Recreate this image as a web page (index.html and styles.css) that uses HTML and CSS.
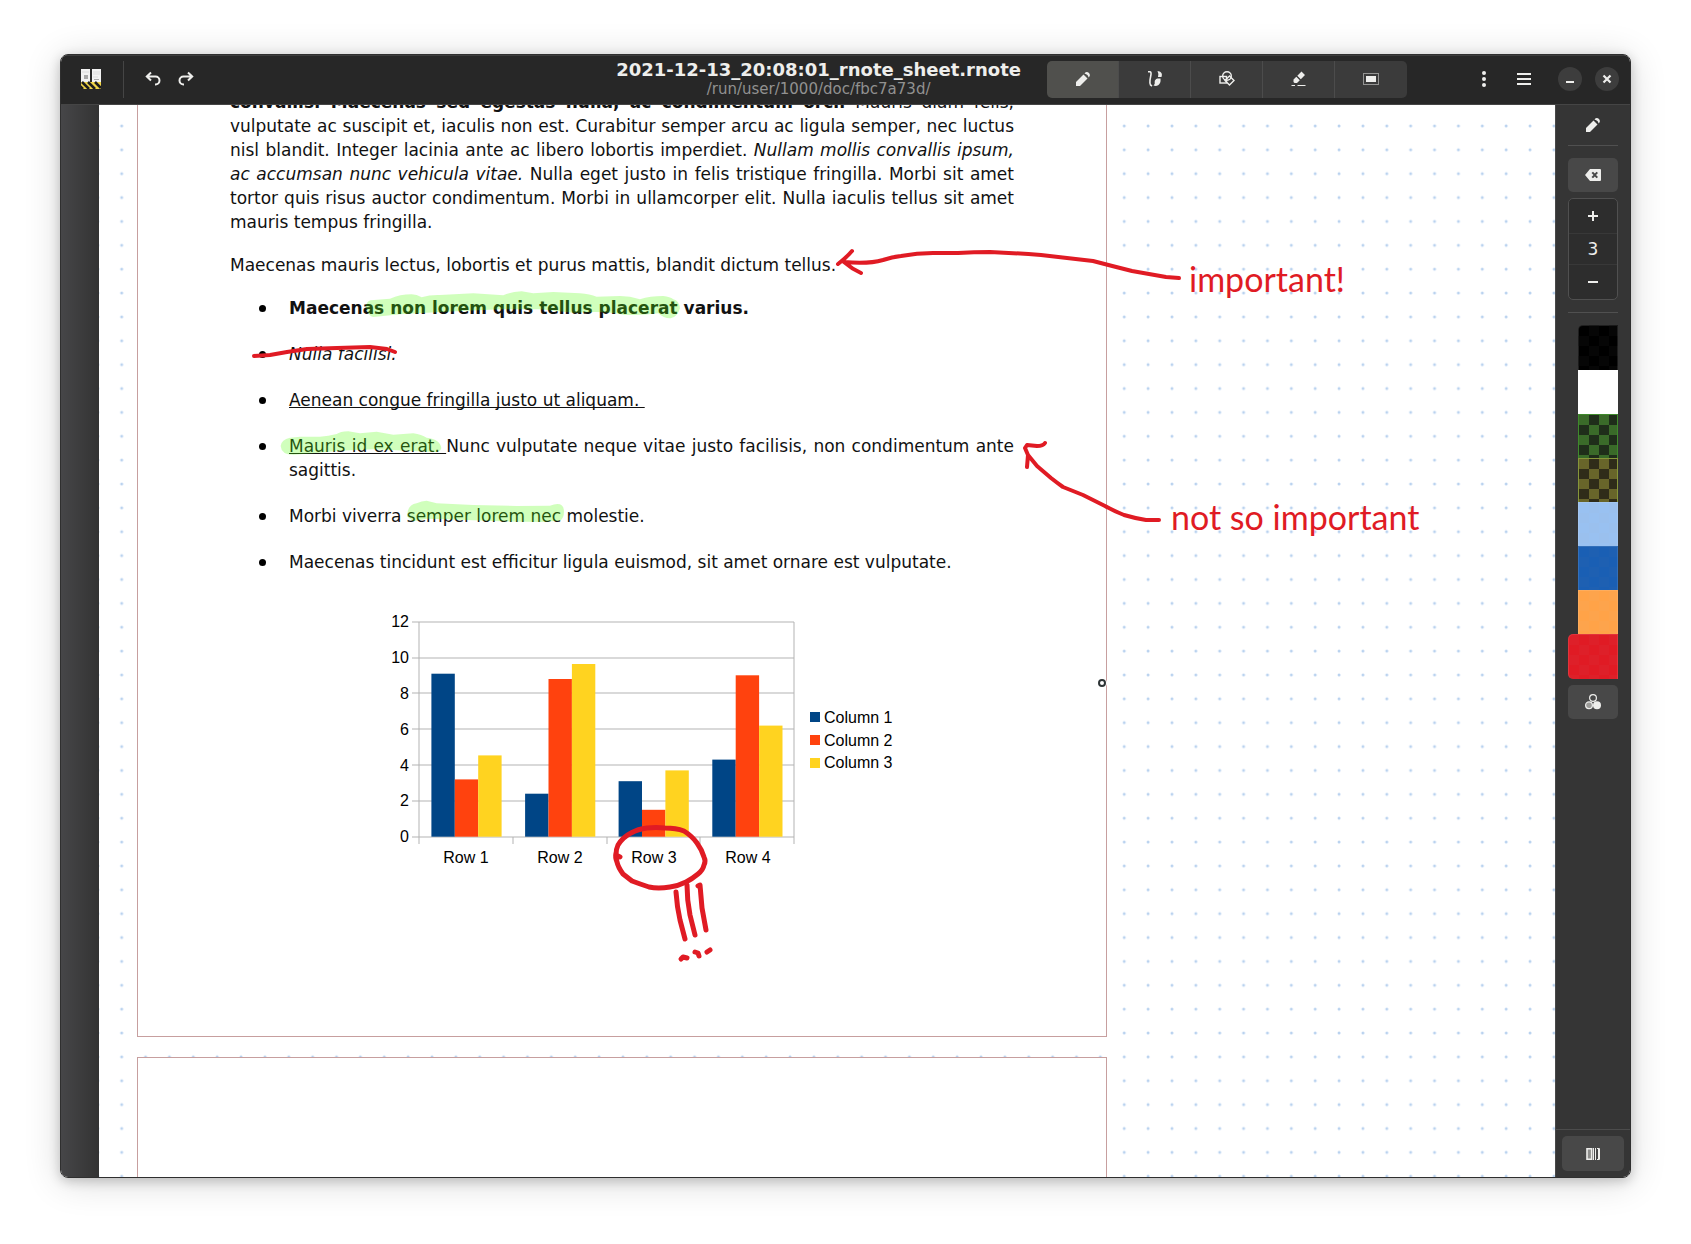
FILE: index.html
```html
<!DOCTYPE html>
<html lang="en">
<head>
	<meta charset="UTF-8">
	<meta name="viewport" content="width=device-width, initial-scale=1.0">
	<title>Rnote</title>
	<link rel="stylesheet" href="styles.css">
</head>
<body>
	<div class="window">
		<header class="headerbar">
			<svg class="app_icon" viewBox="0 0 20 20">
				<rect x="0" y="0" width="9" height="13" fill="#f2f2f2"/>
				<rect x="11" y="0" width="9" height="13" fill="#f2f2f2"/>
				<rect x="3" y="6" width="4" height="4" fill="#a8a8a8"/>
				<path d="M1 3h7M12 3h7M12 5h7M12 8h5" stroke="#dcdcdc"/>
				<path d="M13 10.5h5" stroke="#aaa"/>
				<rect x="0" y="13" width="20" height="7" fill="#f0d54a"/>
				<path d="M1 13l7 7M7 13l7 7M14 13l6 6M-3 15l5 5" stroke="#1e1e1e" stroke-width="2.6"/>
			</svg>
			<div class="history">
				<button class="flat" aria-label="Undo"><svg class="icon" viewBox="0 0 16 16"><path d="M6 1.500L1.800 5.500L6 9.500M2 5.500H10.500a4 4 0 0 1 0 8H10" fill="none" stroke="#eeeeec" stroke-width="2"/></svg></button>
				<button class="flat" aria-label="Redo"><svg class="icon" viewBox="0 0 16 16"><path d="M10 1.500L14.200 5.500L10 9.500M14 5.500H5.500a4 4 0 0 0 0 8H6" fill="none" stroke="#eeeeec" stroke-width="2"/></svg></button>
			</div>
			<div class="title_box">
				<h1 class="title">2021-12-13_20:08:01_rnote_sheet.rnote</h1>
				<div class="subtitle">/run/user/1000/doc/fbc7a73d/</div>
			</div>
			<div class="tools">
				<button class="tool active" aria-label="Pencil"><svg class="icon" viewBox="0 0 16 16"><path d="M1 15V11L8.500 3.500L12.500 7.500L5 15Z"/><path d="M9.500 2.500Q11.500 0 14 2Q16 4.500 13.500 6.500Q13.400 3.500 9.500 2.500Z"/></svg></button>
				<button class="tool" aria-label="Brush"><svg class="icon" viewBox="0 0 16 16"><path d="M1 .8H3Q4.300 1 4 3.500L3 9Q2.600 12 3.500 14L5 15" fill="none" stroke="#eeeeec" stroke-width="1.600"/><path d="M10.500 0C13.500 .500 16 2 14.500 6H11Q12 3 10.500 0ZM10.500 7.500L13.500 7.500Q14 12 11.500 14Q9 15.500 6.500 14.500Q8.300 13 7.700 11Q7.500 8.500 10.500 7.500Z"/></svg></button>
				<button class="tool" aria-label="Shapes"><svg class="icon" viewBox="0 0 16 16"><g fill="none" stroke="#eeeeec" stroke-width="1.400"><circle cx="8" cy="5" r="4.300"/><rect x="1" y="5.500" width="6.500" height="6.500"/><path d="M10.500 5L15 9.500L10.500 14L6 9.500Z"/></g></svg></button>
				<button class="tool" aria-label="Eraser"><svg class="icon" viewBox="0 0 16 16"><path d="M10.500 0.500L14 4L9.800 8.200L6.300 4.700ZM5.300 5.700L8.800 9.200L6 12H3.500L2.500 11V8.500ZM0.500 14H4V15H0.500ZM6.500 14H14.500V15H6.500Z"/></svg></button>
				<button class="tool" aria-label="Selector"><svg class="icon" viewBox="0 0 16 16"><rect x="0.500" y="2.500" width="15" height="11" fill="none" stroke="#eeeeec" stroke-dasharray="1 1"/><rect x="3" y="5" width="10" height="6"/></svg></button>
			</div>
			<div class="menus">
				<button class="flat" aria-label="Canvas menu"><svg class="icon" viewBox="0 0 16 16"><circle cx="8" cy="2" r="2"/><circle cx="8" cy="8" r="2"/><circle cx="8" cy="14" r="2"/></svg></button>
				<button class="flat" aria-label="Main menu"><svg class="icon" viewBox="0 0 16 16"><path d="M1 2h14v2H1zM1 7h14v2H1zM1 12h14v2H1z"/></svg></button>
			</div>
			<div class="window_controls">
				<button class="circle" aria-label="Minimize"><svg class="icon" viewBox="0 0 16 16"><path d="M4 10h8v2H4z"/></svg></button>
				<button class="circle" aria-label="Close"><svg class="icon" viewBox="0 0 16 16"><path d="M4.500 4.500L11.500 11.500M11.500 4.500L4.500 11.500" stroke="#eeeeec" stroke-width="2.200"/></svg></button>
			</div>
		</header>

		<div class="content">
			<div class="gutter"></div>
			<main class="sheet">
				<svg class="dots" width="100%" height="100%">
					<defs>
						<pattern id="dotGrid" x="10.700" y="9" width="23.870" height="23.870" patternUnits="userSpaceOnUse">
							<circle cx="12" cy="12" r="1.500" fill="#b9d2ef"/>
						</pattern>
					</defs>
					<rect width="100%" height="100%" fill="url(#dotGrid)"/>
				</svg>

				<article class="page first">
					<p><b>convallis. Maecenas sed egestas nulla, ac condimentum orci.</b> Mauris diam felis, vulputate ac suscipit et, iaculis non est. Curabitur semper arcu ac ligula semper, nec luctus nisl blandit. Integer lacinia ante ac libero lobortis imperdiet. <i>Nullam mollis convallis ipsum, ac accumsan nunc vehicula vitae.</i> Nulla eget justo in felis tristique fringilla. Morbi sit amet tortor quis risus auctor condimentum. Morbi in ullamcorper elit. Nulla iaculis tellus sit amet mauris tempus fringilla.</p>
					<p>Maecenas mauris lectus, lobortis et purus mattis, blandit dictum tellus.</p>
					<ul>
						<li><b>Maecenas non lorem quis tellus placerat varius.</b></li>
						<li><i>Nulla facilisi.</i></li>
						<li><u>Aenean congue fringilla justo ut aliquam.&nbsp;</u></li>
						<li><u>Mauris id ex erat. </u>Nunc vulputate neque vitae justo facilisis, non condimentum ante sagittis.</li>
						<li>Morbi viverra semper lorem nec molestie.</li>
						<li>Maecenas tincidunt est efficitur ligula euismod, sit amet ornare est vulputate.</li>
					</ul>
					<svg class="chart" viewBox="380 610 530 260" width="530" height="260">
						<g class="grid">
							<path d="M412 622H794M412 658H794M412 693H794M412 729H794M412 765H794M412 801H794M412 837H794"/>
							<path d="M419 622V844M794 622V844M513 837V844M607 837V844M700 837V844"/>
						</g>
						<g fill="#004586">
							<rect x="431.400" y="673.700" width="23.400" height="163"/>
							<rect x="525.100" y="793.700" width="23.400" height="43"/>
							<rect x="618.600" y="781.200" width="23.400" height="55.500"/>
							<rect x="712.300" y="759.600" width="23.400" height="77.100"/>
						</g>
						<g fill="#ff420e">
							<rect x="454.800" y="779.400" width="23.400" height="57.300"/>
							<rect x="548.500" y="679" width="23.400" height="157.700"/>
							<rect x="642" y="809.800" width="23.400" height="26.900"/>
							<rect x="735.700" y="675.300" width="23.400" height="161.400"/>
						</g>
						<g fill="#ffd320">
							<rect x="478.200" y="755.400" width="23.400" height="81.300"/>
							<rect x="571.900" y="664" width="23.400" height="172.700"/>
							<rect x="665.400" y="770.400" width="23.400" height="66.300"/>
							<rect x="759.100" y="725.600" width="23.400" height="111.100"/>
						</g>
						<g text-anchor="end">
							<text x="409" y="627">12</text>
							<text x="409" y="663">10</text>
							<text x="409" y="699">8</text>
							<text x="409" y="735">6</text>
							<text x="409" y="771">4</text>
							<text x="409" y="806">2</text>
							<text x="409" y="842">0</text>
						</g>
						<g text-anchor="middle">
							<text x="466" y="863">Row 1</text>
							<text x="560" y="863">Row 2</text>
							<text x="654" y="863">Row 3</text>
							<text x="748" y="863">Row 4</text>
						</g>
						<rect x="810" y="712" width="10" height="10" fill="#004586"/>
						<rect x="810" y="735" width="10" height="10" fill="#ff420e"/>
						<rect x="810" y="758" width="10" height="10" fill="#ffd320"/>
						<text x="824" y="723">Column 1</text>
						<text x="824" y="746">Column 2</text>
						<text x="824" y="768">Column 3</text>
					</svg>
				</article>
				<article class="page"></article>

				<!-- pen strokes and notes on top of the document -->
				<svg class="ink" viewBox="99 105 1456 1072" width="1456" height="1072">
					<g class="marker" transform="translate(240 280) scale(.3333)">
						<path d="M378 80Q380 64 392 61L450 56Q480 43 515 43Q530 43 545 52Q570 44 600 45L700 40L790 46Q810 36 845 34L880 40L940 36L1020 40Q1050 42 1070 50L1140 48Q1170 48 1200 58Q1230 48 1270 48Q1290 50 1300 58Q1318 62 1320 85Q1312 112 1292 115Q1272 116 1255 100Q1200 108 1150 104Q1110 95 1060 96L1000 98L900 88L780 88L650 94L560 98L480 103L400 111Q385 110 378 80Z"/>
						<path d="M122 498Q124 478 150 473L180 470L240 470Q265 468 290 462Q300 455 325 454L360 460L410 455L460 464L520 460Q545 464 560 473Q602 478 604 505Q600 518 580 516L500 512L400 508L300 512L220 520L160 524Q124 524 122 498Z"/>
						<path d="M502 710Q500 675 530 670Q545 662 560 662L590 670L700 675L830 678L930 677Q972 662 972 695Q972 715 960 722L900 726L780 724L620 718L560 716L520 724Z"/>
					</g>
					<g class="pen">
						<path d="M254 356L270 355L287 352L307 349L337 348L370 347L387 349L395 352"/>
						<path d="M838 264Q846 258 852 251M861 273Q852 269 844 262C866 264 876 262 883 260Q892 257 901 256Q917 253 933 253L958 253Q974 252 990 252Q1015 253 1041 255Q1068 258 1093 261Q1112 266 1132 271L1166 277L1179 278"/>
						<path d="M1159 520L1146 520Q1134 518 1124 515Q1114 511 1105 506L1083 495L1063 487Q1056 482 1051 478L1037 466L1028 455M1027 467L1028 455L1025 448L1027 445L1037 446Q1043 446 1045 443"/>
						<g stroke-width="5">
							<path d="M620 857L616 855Q616 849 618 845Q623 837 631 833Q638 829 647 828Q656 827 665 828Q676 828 684 831Q692 836 697 843Q702 850 704 857Q706 861 704 865Q703 870 698 874Q692 879 686 882Q678 886 670 887Q658 889 649 887Q640 884 632 881L623 874Q618 867 617 862Q615 857 616 853"/>
							<path d="M676 892Q677 907 680 920L685 939M687 885Q687 900 690 915L695 935M698 886L700 885L702 908L706 930"/>
							<path d="M681 959L683 957L687 958M695 952L698 953L699 956M707 952L710 950"/>
						</g>
					</g>
					<circle cx="1102" cy="683" r="5" fill="#fff"/>
					<circle cx="1102" cy="683" r="3" fill="#fff" stroke="#2e3436" stroke-width="2"/>
				</svg>
				<div class="note important">important!</div>
				<div class="note not_so_important">not so important</div>
			</main>

			<aside class="sidebar">
				<svg class="icon pen_indicator" viewBox="0 0 16 16"><path d="M1 15V11L8.500 3.500L12.500 7.500L5 15Z"/><path d="M9.500 2.500Q11.500 0 14 2Q16 4.500 13.500 6.500Q13.400 3.500 9.500 2.500Z"/></svg>
				<div class="line"></div>
				<button class="side_btn" aria-label="Clear"><svg class="icon" viewBox="0 0 16 16"><path fill-rule="evenodd" d="M0 8L5 2H15Q16 2 16 3V13Q16 14 15 14H5ZM6.500 6L8.500 8L6.500 10L8 11.200L9.800 9.500L11.600 11.200L13 10L11 8L13 6L11.600 4.800L9.800 6.500L8 4.800Z"/></svg></button>
				<div class="spin">
					<button aria-label="Increase"><svg class="icon" viewBox="0 0 16 16"><path d="M3 7h4V3h2v4h4v2H9v4H7V9H3z"/></svg></button>
					<input type="text" value="3" aria-label="Width">
					<button aria-label="Decrease"><svg class="icon" viewBox="0 0 16 16"><path d="M3 7h10v2H3z"/></svg></button>
				</div>
				<div class="line"></div>
				<div class="palette">
					<button class="swatch black" aria-label="Black"></button>
					<button class="swatch white" aria-label="White"></button>
					<button class="swatch green" aria-label="Green"></button>
					<button class="swatch olive" aria-label="Yellow"></button>
					<button class="swatch sky" aria-label="Light blue"></button>
					<button class="swatch blue" aria-label="Blue"></button>
					<button class="swatch orange" aria-label="Orange"></button>
					<button class="swatch red selected" aria-label="Red"></button>
				</div>
				<button class="side_btn" aria-label="Choose color"><svg class="icon" viewBox="0 0 16 16"><circle cx="8" cy="4" r="3.400" fill="none" stroke="#eeeeec" stroke-width="1.200"/><circle cx="4" cy="11.300" r="3.400" fill="#9a9a98" stroke="#eeeeec" stroke-width="1.200"/><circle cx="12" cy="11.300" r="4"/></svg></button>
				<div class="sidebar_end">
					<button class="side_btn wide" aria-label="Toggle sidebar"><svg class="icon" viewBox="0 0 16 16"><path d="M2 2.800H6.700V13.200H2Z" fill="#8d8d8b" stroke="#eeeeec" stroke-width="1.600"/><path d="M8 2h1v12H8zM10 2h1v12h-1zM12 2h2q1 0 1 1v10q0 1-1 1h-2v-1h1V3h-1z"/></svg></button>
				</div>
			</aside>
		</div>
	</div>
</body>
</html>
```

FILE: styles.css
```css
*{
	box-sizing: border-box;
}
body{
	margin: 0;
	padding: 54px 60px 66px;
	height: 100vh;
	background-color: white;
	font-family: "DejaVu Sans", sans-serif;
}
button{
	display: flex;
	align-items: center;
	justify-content: center;
	padding: 0;
	border: none;
	background: none;
}
.icon{
	width: 16px;
	height: 16px;
	fill: #eeeeec;
}
.window{
	display: flex;
	flex-direction: column;
	height: 100%;
	overflow: hidden;
	border: solid 1px #2f2f2f;
	border-radius: 8px;
	box-shadow: 0 3px 12px rgba(0,0,0,0.2), 0 4px 36px rgba(0,0,0,0.16);
}

/* header */
.headerbar{
	display: flex;
	flex: none;
	align-items: center;
	height: 50px;
	padding: 0 11px 2px 20px;
	border-top: solid 1px #3d3d3d;
	border-bottom: solid 1px #454545;
	background-color: #272727;
}
.app_icon{
	width: 20px;
	height: 20px;
}
.history{
	display: flex;
	align-items: center;
	gap: 1px;
	height: 37px;
	margin-left: 22px;
	padding-left: 13px;
	border-left: solid 1px #454545;
}
.flat{
	width: 32px;
	height: 36px;
}
.title_box{
	margin-left: auto;
	margin-right: 26px;
	text-align: center;
}
.title{
	margin: 0;
	font-size: 18px;
	line-height: 20px;
	color: #eeeeec;
}
.subtitle{
	font-size: 15px;
	line-height: 18px;
	color: #919190;
}
.tools{
	display: flex;
	overflow: hidden;
	border-radius: 5px;
}
.tool{
	width: 72px;
	height: 37px;
	border-right: solid 1px #4c4c4c;
	background-color: #3b3b3b;
}
.tool:last-child{
	border-right: none;
}
.tool.active{
	background-color: #50504d;
}
.menus{
	display: flex;
	gap: 8px;
	margin-left: 61px;
}
.window_controls{
	display: flex;
	gap: 13px;
	align-items: center;
	margin-left: 18px;
}
.circle{
	width: 24px;
	height: 24px;
	border-radius: 50%;
	background-color: #3d3d3d;
}

/* canvas */
.content{
	display: flex;
	flex: 1;
	min-height: 0;
}
.gutter{
	width: 38px;
	background: linear-gradient(to right, #464648, #333);
}
.sheet{
	position: relative;
	flex: 1;
	overflow: hidden;
	background-color: white;
}
.dots, .ink{
	position: absolute;
	top: 0;
	left: 0;
}
.page{
	position: relative;
	width: 970px;
	height: 1000px;
	margin: 0 0 20px 38px;
	padding: 0 92px;
	border: solid 1px #c79f9f;
	background-color: white;
	font-size: 17px;
	line-height: 24px;
	color: #111;
}
.page.first{
	height: 947px;
	margin-top: -15px;
	border-top: none;
}
.page p{
	margin: 0 0 19px;
	text-align: justify;
}
.page ul{
	margin: 0;
	padding-left: 59px;
	list-style: none;
}
.page li{
	position: relative;
	margin-bottom: 22px;
	text-align: justify;
}
.page li::before{
	content: "";
	position: absolute;
	top: 9px;
	left: -30px;
	width: 7px;
	height: 7px;
	border-radius: 50%;
	background-color: black;
}
.page u{
	text-decoration-skip-ink: none;
}
.chart{
	display: block;
	margin-top: 36px;
	margin-left: 150px;
	font-family: "Liberation Sans", sans-serif;
	font-size: 16px;
}
.grid{
	fill: none;
	stroke: #b3b3b3;
}
.marker{
	fill: rgba(87,255,16,0.28);
	stroke: none;
}
.pen{
	fill: none;
	stroke: #e01b24;
	stroke-width: 4;
	stroke-linecap: round;
	stroke-linejoin: round;
}
.note{
	position: absolute;
	font-family: Lato, sans-serif;
	font-size: 34px;
	line-height: 40px;
	color: #e01b24;
}
.note.important{
	left: 1090px;
	top: 154px;
}
.note.not_so_important{
	left: 1072px;
	top: 392px;
}

/* sidebar */
.sidebar{
	display: flex;
	flex: none;
	flex-direction: column;
	align-items: center;
	width: 75px;
	padding-top: 12px;
	border-left: solid 1px #484848;
	background-color: #353535;
}
.pen_indicator{
	margin-bottom: 12px;
}
.line{
	width: 50px;
	height: 1px;
	background-color: #505050;
}
.side_btn{
	flex: none;
	width: 50px;
	height: 34px;
	border-radius: 5px;
	background-color: #484848;
}
.line + .side_btn{
	margin-top: 12px;
}
.spin{
	display: flex;
	flex-direction: column;
	width: 50px;
	height: 102px;
	margin: 6px 0 12px;
	border: solid 1px #505050;
	border-radius: 5px;
	background-color: #2d2d2d;
}
.spin button{
	flex: 1;
}
.spin input{
	width: 48px;
	height: 32px;
	padding: 0;
	border: solid #383838;
	border-width: 1px 0;
	background: none;
	font-family: "DejaVu Sans", sans-serif;
	font-size: 17px;
	text-align: center;
	color: #eeeeec;
}
.palette{
	display: flex;
	flex-direction: column;
	align-items: flex-end;
	width: 50px;
	margin: 12px 0 6px;
}
.swatch{
	width: 40px;
	height: 44px;
	border: solid 1px rgba(255,255,255,0.1);
	border-bottom: none;
	background-size: 20px 20px;
}
.swatch.black{
	height: 45px;
	border-radius: 5px 0 0 0;
	background-image: repeating-conic-gradient(#060606 0 25%, #000 0 50%);
}
.swatch.white{
	background-color: white;
}
.swatch.green{
	border-color: #3f8a2c;
	background-image: repeating-conic-gradient(#1f2d1a 0 25%, #3a6a29 0 50%);
}
.swatch.olive{
	border-color: #86963a;
	background-image: repeating-conic-gradient(#2f2c19 0 25%, #68652a 0 50%);
}
.swatch.sky{
	background-image: repeating-conic-gradient(#9ac0ee 0 25%, #99c1f1 0 50%);
}
.swatch.blue{
	background-image: repeating-conic-gradient(#1e60b2 0 25%, #1a5fb4 0 50%);
}
.swatch.orange{
	background-image: repeating-conic-gradient(#fda44c 0 25%, #ffa348 0 50%);
}
.swatch.red{
	background-image: repeating-conic-gradient(#e01b24 0 25%, #de2029 0 50%);
}
.swatch.selected{
	width: 50px;
	height: 45px;
	border-radius: 5px 0 0 5px;
}
.sidebar_end{
	display: flex;
	justify-content: center;
	width: 100%;
	margin-top: auto;
	padding: 6px 0;
	border-top: solid 1px #4c4c4c;
}
.side_btn.wide{
	width: 62px;
	height: 35px;
}
```
